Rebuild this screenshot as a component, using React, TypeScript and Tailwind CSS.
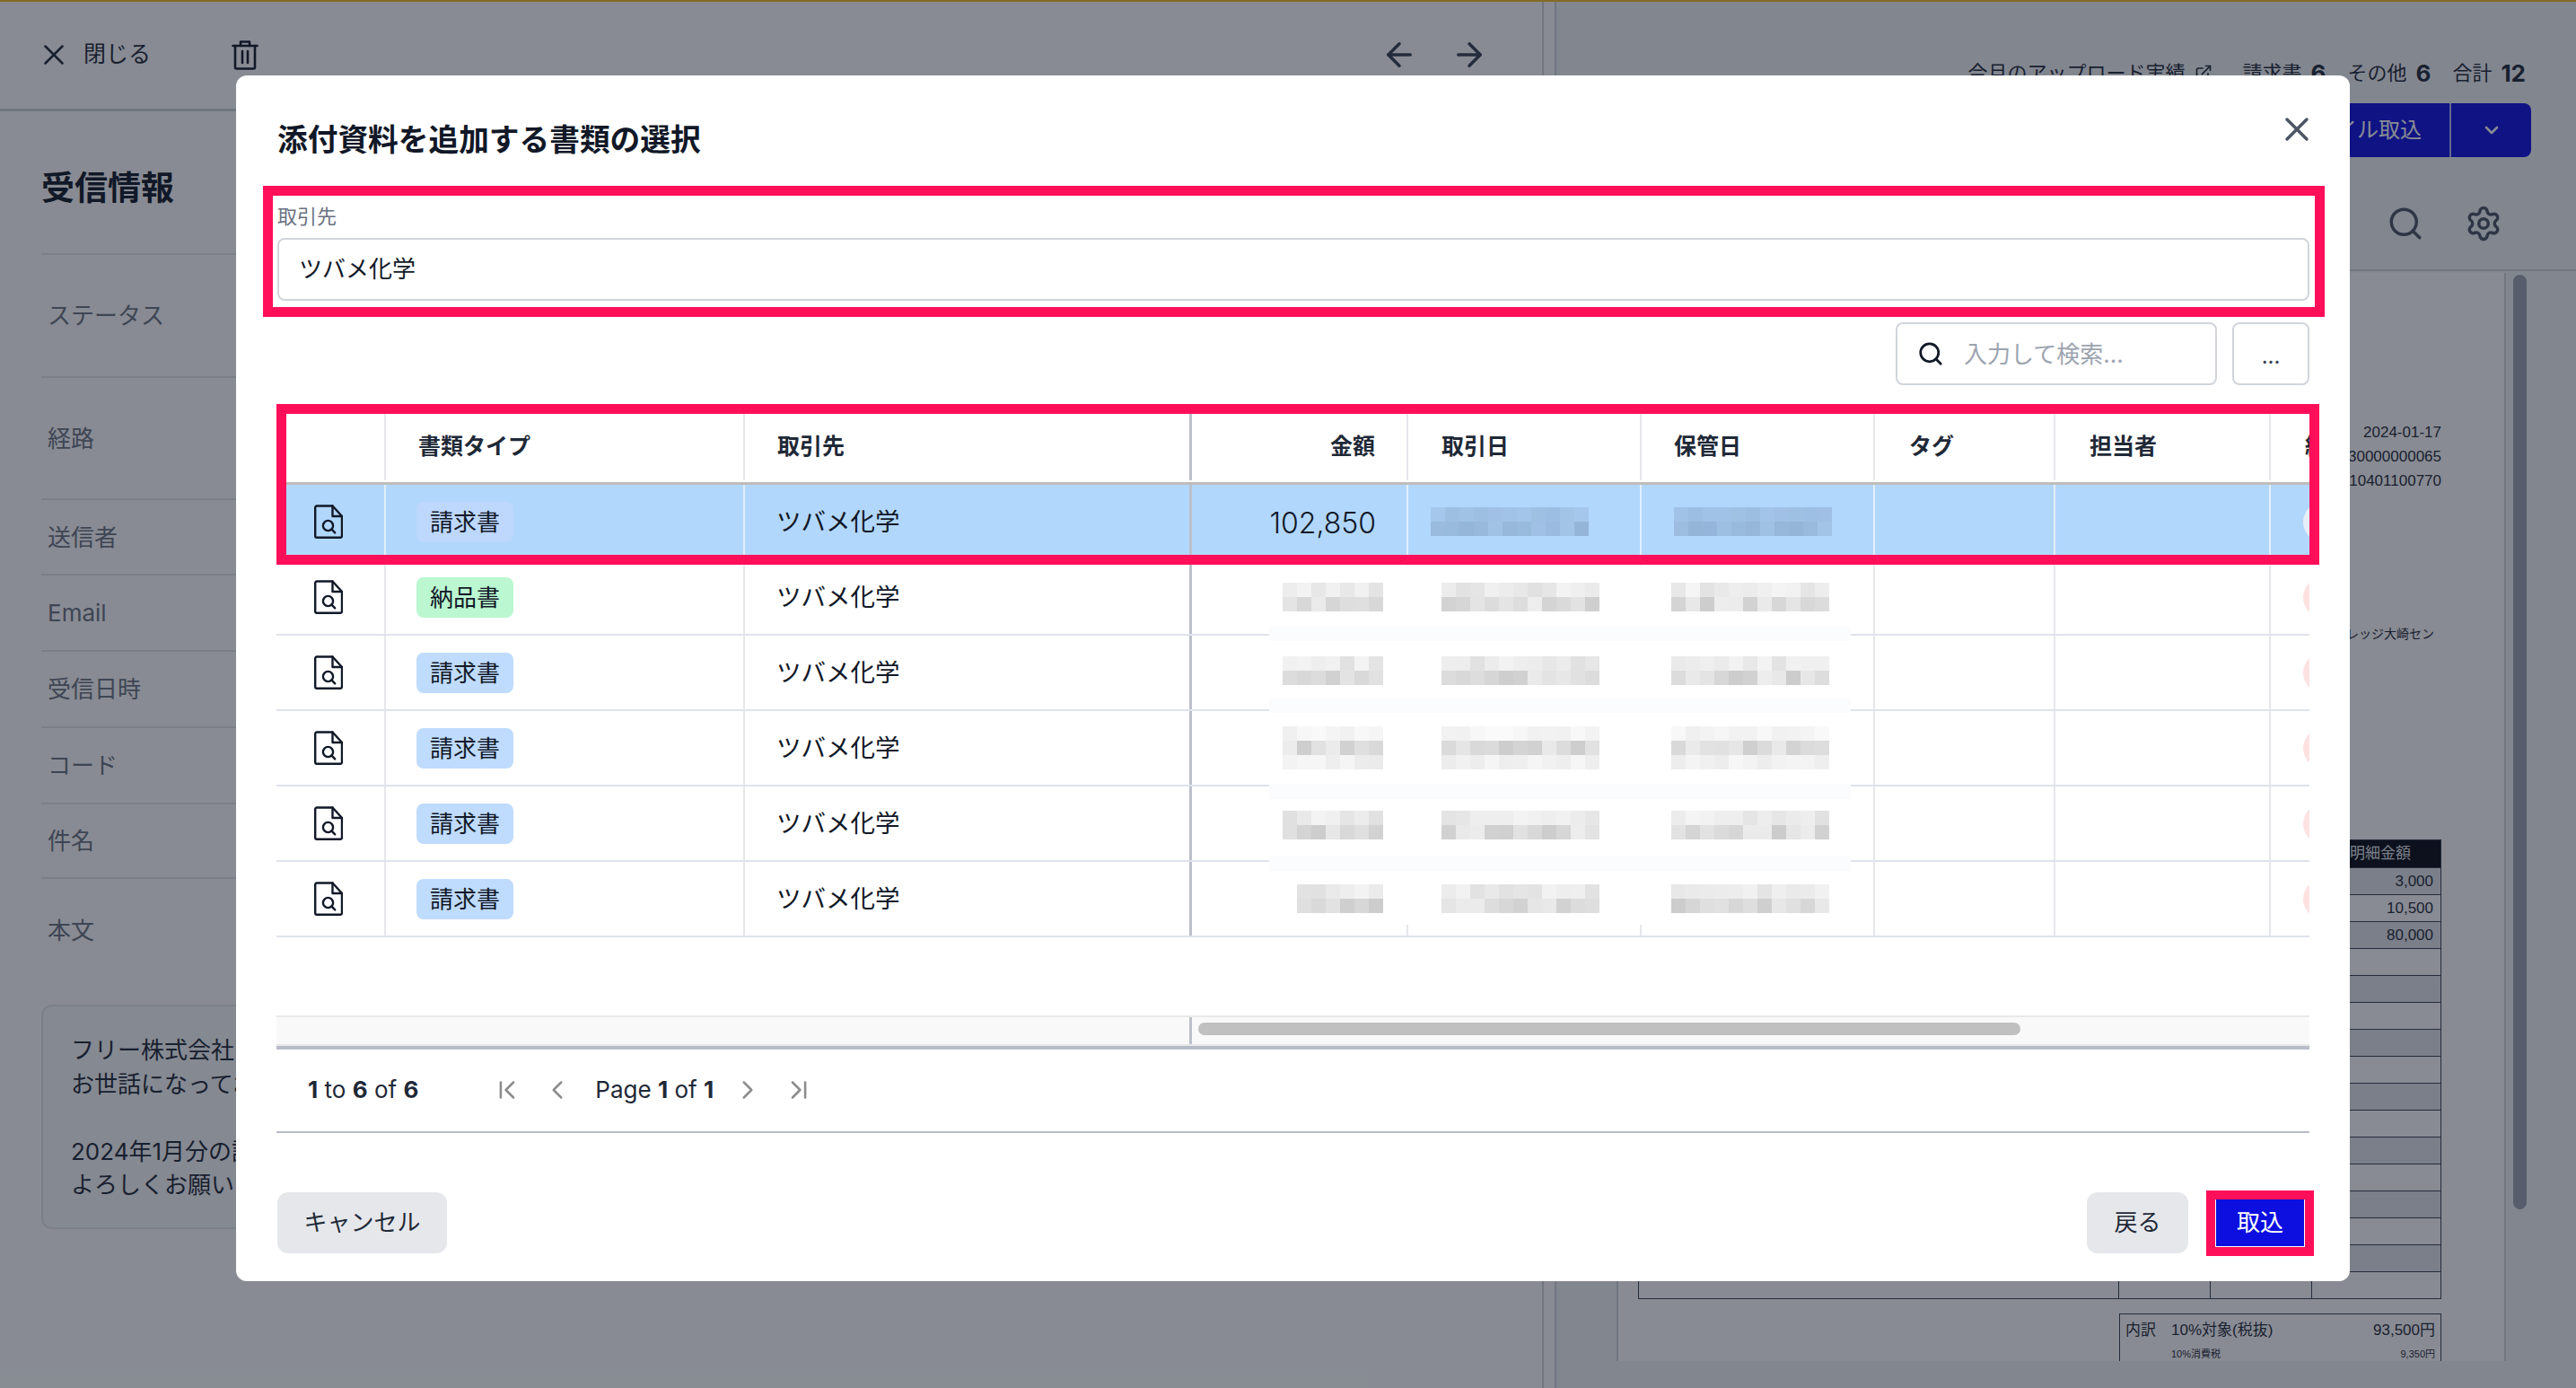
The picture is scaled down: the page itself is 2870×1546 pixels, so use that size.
import React from 'react';
import { X, ArrowLeft, ArrowRight, Search, Settings, ExternalLink, ChevronDown, ChevronFirst, ChevronLast, ChevronLeft, ChevronRight } from 'lucide-react';

const leftRows: [string, string][] = [
  ['ステータス', 'h-[137px]'],
  ['経路', 'h-[136px]'],
  ['送信者', 'h-[84px]'],
  ['Email', 'h-[85px]'],
  ['受信日時', 'h-[85px]'],
  ['コード', 'h-[85px]'],
  ['件名', 'h-[83px]'],
];

const docs = [
  { type: '請求書', badge: 'bg-[#bfdbfe]', selected: true, amount: '102,850', lines: 2, cols: 7, dy: 0 },
  { type: '納品書', badge: 'bg-[#bbf7d0]', selected: false, amount: '', lines: 2, cols: 7, dy: 0 },
  { type: '請求書', badge: 'bg-[#bfdbfe]', selected: false, amount: '', lines: 2, cols: 7, dy: -4 },
  { type: '請求書', badge: 'bg-[#bfdbfe]', selected: false, amount: '', lines: 3, cols: 7, dy: 0 },
  { type: '請求書', badge: 'bg-[#bfdbfe]', selected: false, amount: '', lines: 2, cols: 7, dy: 4 },
  { type: '請求書', badge: 'bg-[#bfdbfe]', selected: false, amount: '', lines: 2, cols: 6, dy: 0 },
];

const pix = (seed: number, r: number, c: number) => {
  const v = Math.sin(seed * 12.9898 + r * 78.233 + c * 37.719) * 43758.5453;
  return v - Math.floor(v);
};

// row weights so the mosaic reads like a blurred line of text
const weights: Record<number, number[][]> = {
  2: [[0.04, 0.08], [0.07, 0.13]],
  3: [[0.02, 0.04], [0.07, 0.13], [0.03, 0.05]],
};

// モザイク処理された値
const Mosaic = ({ seed, lines, cols, dy = 0, tint = false }: { seed: number; lines: number; cols: number; dy?: number; tint?: boolean }) => (
  <div className="relative z-[2] flex flex-col" style={{ marginTop: dy }}>
    {Array.from({ length: lines }).map((_, r) => (
      <div key={r} className="flex">
        {Array.from({ length: cols }).map((_, c) => {
          const [base, range] = weights[lines][r];
          const a = base + pix(seed, r, c) * range;
          return (
            <div
              key={c}
              className="h-4 w-4"
              style={{ backgroundColor: tint ? `rgba(70,90,120,${a + 0.08})` : `rgba(0,0,0,${a})` }}
            />
          );
        })}
      </div>
    ))}
  </div>
);

const DocIcon = () => (
  <svg width="32" height="38" viewBox="0 0 32 38" fill="none" stroke="#111827" strokeWidth="2.4" strokeLinejoin="round" strokeLinecap="round">
    <path d="M3 1.5h17.5L31 13v22a1.8 1.8 0 0 1-1.8 1.8H3A1.8 1.8 0 0 1 1.2 35V3.3A1.8 1.8 0 0 1 3 1.5z" />
    <path d="M20.5 1.5V13H31" />
    <circle cx="15.5" cy="23.5" r="5.6" />
    <path d="M19.6 27.6l3.6 3.8" />
  </svg>
);

const TrashIcon = () => (
  <svg width="30" height="34" viewBox="0 0 30 34" fill="none" stroke="#111827" strokeWidth="2.6" strokeLinecap="round" strokeLinejoin="round">
    <path d="M1.5 7h27" />
    <path d="M10 7V2.5h10V7" />
    <path d="M4 7v24a1.5 1.5 0 0 0 1.5 1.5h19A1.5 1.5 0 0 0 26 31V7" />
    <path d="M12 13v13M18 13v13" />
  </svg>
);

const App: React.FC = () => {
  return (
    <div className="relative flex h-screen w-screen flex-col overflow-hidden bg-white font-['Inter','Noto_Sans_CJK_JP',sans-serif] text-[#1f2937]">
      <div className="h-[2px] shrink-0 bg-[#fbbf24]" />
      <div className="flex min-h-0 flex-1">
        {/* Left: 受信情報 */}
        <div className="h-full w-[1734px] shrink-0 border-r-2 border-[#d1d5db]">
          <div className="h-full w-[1720px] border-r-2 border-[#d1d5db]">
            <div className="flex h-[122px] items-center border-b-[3px] border-[#d1d5db] pb-[2px] pl-[41px]">
              <X size={38} strokeWidth={1.6} />
              <span className="ml-[14px] text-[25px]">閉じる</span>
              <div className="ml-[90px] flex">
                <TrashIcon />
              </div>
              <div className="ml-auto mr-[60px] flex gap-[36px] text-[#374151]">
                <ArrowLeft size={42} strokeWidth={2} />
                <ArrowRight size={42} strokeWidth={2} />
              </div>
            </div>
            <div className="pl-[46px] pr-[38px]">
              <div className="flex h-[158px] items-center pt-[14px] text-[37px] font-bold text-[#111827]">受信情報</div>
              {leftRows.map(([label, h]) => (
                <div key={label} className={`flex items-center border-t-2 border-[#e5e7eb] pl-[7px] text-[26px] text-[#6b7280] ${h}`}>
                  {label}
                </div>
              ))}
              <div className="h-[142px] border-t-2 border-[#e5e7eb] pl-[7px] pt-[38px] text-[26px] text-[#6b7280]">本文</div>
              <div className="h-[250px] rounded-xl border-2 border-[#e5e7eb] bg-[#f9fafb] px-[31px] pt-[30px] text-[26px] leading-[37.5px]">
                <div>フリー株式会社 御中</div>
                <div>お世話になっております。</div>
                <div className="h-[37.5px]" />
                <div>2024年1月分の請求書をお送りします。</div>
                <div>よろしくお願いいたします。</div>
              </div>
            </div>
          </div>
        </div>

        {/* Right: プレビュー */}
        <div className="flex h-full min-w-0 flex-1 flex-col bg-[#f3f4f6]">
          <div className="flex h-[300px] shrink-0 flex-col items-end border-b-2 border-[#d1d5db] pr-[50px]">
            <div className="mt-[62px] flex h-[34px] items-center pr-[6px] text-[22px]">
              <span>今月のアップロード実績</span>
              <ExternalLink size={20} className="ml-[10px]" />
              <span className="ml-[34px]">請求書</span>
              <b className="ml-[10px] text-[26px]">6</b>
              <span className="ml-[24px]">その他</span>
              <b className="ml-[10px] text-[26px]">6</b>
              <span className="ml-[24px]">合計</span>
              <b className="ml-[10px] text-[26px]">12</b>
            </div>
            <div className="mt-[17px] flex h-[60px] items-center rounded-lg bg-[#0c0fe0] text-white">
              <span className="pl-8 pr-[31px] text-[24px]">ファイル取込</span>
              <div className="flex h-full w-[91px] items-center justify-center border-l-2 border-white/70">
                <ChevronDown size={24} strokeWidth={2.6} />
              </div>
            </div>
            <div className="mt-[53px] flex items-center gap-[45px] pr-[32px] text-[#4b5563]">
              <Search size={42} strokeWidth={2} />
              <Settings size={42} strokeWidth={2} />
            </div>
          </div>
          <div className="flex min-h-0 flex-1 gap-2 pl-[67px]">
            <div className="mt-[2px] flex h-[1212px] w-[991px] flex-col items-end overflow-hidden border-x-2 border-[#d1d5db] bg-white pr-[70px] font-['Liberation_Sans','Noto_Sans_CJK_JP',sans-serif]">
              <div className="mt-[168px] flex flex-col items-end gap-[7px] text-[17px] leading-[20px]">
                <span>2024-01-17</span>
                <span>T1230000000065</span>
                <span>0310401100770</span>
              </div>
              <div className="mr-2 mt-[148px] whitespace-nowrap text-[14px] leading-[24px]">東京都品川区ナレッジ大崎セン</div>
              <div className="mt-[217px] w-[895px] border border-[#374151] text-[17px]">
                <div className="flex h-[30px] bg-[#060a12] text-[#e5e7eb]">
                  <span className="ml-auto w-[101px] leading-[30px]">明細金額</span>
                </div>
                {Array.from({ length: 16 }).map((_, i) => (
                  <div key={i} className={`flex h-[30px] border-t border-[#374151] ${i % 2 === 0 ? 'bg-[#e5e7eb]' : 'bg-white'}`}>
                    <div className="flex-1" />
                    <div className="w-[102px] border-l border-[#374151]" />
                    <div className="w-[113px] border-l border-[#374151]" />
                    <div className="w-[144px] border-l border-[#374151] pr-2 text-right leading-[30px]">
                      {['3,000', '10,500', '80,000'][i] ?? ''}
                    </div>
                  </div>
                ))}
              </div>
              <div className="mt-[16px] w-[359px] border border-[#374151] px-[6px] pt-1 text-[17px]">
                <div className="flex h-[28px] items-center">
                  <span className="w-[51px]">内訳</span>
                  <span>10%対象(税抜)</span>
                  <span className="ml-auto">93,500円</span>
                </div>
                <div className="flex h-[24px] items-center text-[11px]">
                  <span className="ml-[51px]">10%消費税</span>
                  <span className="ml-auto">9,350円</span>
                </div>
              </div>
            </div>
            <div className="mt-[4px] h-[1041px] w-[15px] rounded-full bg-[#9ca3af]" />
          </div>
        </div>
      </div>

      {/* overlay */}
      <div className="absolute inset-0 bg-[#111827]/50" />

      {/* Modal */}
      <div className="absolute left-[263px] top-[84px] flex h-[1343px] w-[2355px] flex-col rounded-xl bg-white pl-[46px] pr-[45px] text-[#111827]">
        <div className="flex h-[142px] shrink-0 items-center justify-between">
          <h2 className="pt-[2px] text-[33.7px] font-bold">添付資料を追加する書類の選択</h2>
          <X size={44} strokeWidth={1.9} className="-mr-[8px] -mt-[22px] text-[#4b5563]" />
        </div>
        <div className="h-[39px] shrink-0 pt-[2px] text-[22px] leading-[26px] text-[#6b7280]">取引先</div>
        <div className="flex h-[70px] shrink-0 items-center rounded-lg border-2 border-[#d1d5db] pb-[2px] pl-[22px] text-[26px]">ツバメ化学</div>
        <div className="mt-[24px] flex h-[70px] shrink-0 justify-end gap-[17px]">
          <div className="flex w-[358px] items-center rounded-lg border-2 border-[#d1d5db] pl-[22px]">
            <Search size={30} strokeWidth={2.2} className="text-[#111827]" />
            <span className="ml-[22px] text-[26px] text-[#9ca3af]">入力して検索...</span>
          </div>
          <div className="flex w-[86px] items-end justify-center rounded-lg border-2 border-[#d1d5db] pb-[18px] text-[24px] leading-[24px] text-[#374151]">...</div>
        </div>

        {/* table */}
        <div className="relative mt-[31px] h-[705px] shrink-0 overflow-hidden -ml-px">
          <div className="flex h-[80px] w-[2400px] border-b-[3px] border-[#bdbdbd] pb-[2px] text-[25px] font-semibold text-[#1f2937]">
            <div className="w-[122px] border-r-2 border-[#e5e7eb]" />
            <div className="flex w-[400px] items-center border-r-2 border-[#e5e7eb] pl-[36px]">書類タイプ</div>
            <div className="flex w-[498px] items-center border-r-[3px] border-[#bcc0cb] pl-[36px]">取引先</div>
            <div className="flex w-[241px] items-center justify-end border-r-2 border-[#e5e7eb] pr-[35px]">金額</div>
            <div className="flex w-[260px] items-center border-r-2 border-[#e5e7eb] pl-[37px]">取引日</div>
            <div className="flex w-[260px] items-center border-r-2 border-[#e5e7eb] pl-[36px]">保管日</div>
            <div className="flex w-[201px] items-center border-r-2 border-[#e5e7eb] pl-[38px]">タグ</div>
            <div className="flex w-[240px] items-center border-r-2 border-[#e5e7eb] pl-[38px]">担当者</div>
            <div className="flex w-[178px] items-center pl-[38px]">紐付け</div>
          </div>
          {docs.map((d, i) => {
            const line = d.selected ? 'border-[#e3eefb]' : 'border-[#e5e7eb]';
            return (
              <div key={i} className={`flex h-[84px] w-[2400px] border-b-2 border-[#dfe3ec] text-[27.5px] ${d.selected ? 'bg-[#b2d7fc]' : 'bg-white'}`}>
                <div className={`flex w-[122px] items-center justify-center border-r-2 pr-[4px] ${line}`}>
                  <DocIcon />
                </div>
                <div className={`flex w-[400px] items-center border-r-2 pl-[34px] text-[26px] ${line}`}>
                  <span className={`flex h-[45px] w-[108px] items-center justify-center rounded-lg ${d.selected ? 'bg-[#bdd7fd]' : d.badge}`}>{d.type}</span>
                </div>
                <div className="flex w-[498px] items-center border-r-[3px] border-[#bcc0cb] pl-[35px] pt-[2px]">ツバメ化学</div>
                <div className={`flex w-[241px] items-center justify-end border-r-2 pr-[26px] ${line}`}>
                  {d.amount ? (
                    <span className="pr-[8px] pt-[3px] text-[32px] font-light">{d.amount}</span>
                  ) : (
                    <Mosaic seed={i * 3 + 1} lines={d.lines} cols={d.cols} dy={d.dy} />
                  )}
                </div>
                <div className={`flex w-[260px] items-center border-r-2 ${d.selected ? 'pl-[25px]' : 'pl-[37px]'} ${line}`}>
                  <Mosaic seed={i * 3 + 2} lines={d.lines} cols={11} dy={d.dy} tint={d.selected} />
                </div>
                <div className={`flex w-[260px] items-center border-r-2 ${d.selected ? 'pl-[36px]' : 'pl-[33px]'} ${line}`}>
                  <Mosaic seed={i * 3 + 3} lines={d.lines} cols={11} dy={d.dy} tint={d.selected} />
                </div>
                <div className={`w-[201px] border-r-2 ${line}`} />
                <div className={`w-[240px] border-r-2 ${line}`} />
                <div className="flex w-[178px] items-center pl-[36px]">
                  <span className={`h-[45px] w-[60px] rounded-full ${d.selected ? 'bg-[#e6eef8]' : 'bg-[#fee2e2]'}`} />
                </div>
              </div>
            );
          })}
          {/* モザイク編集の白塗り */}
          <div className="absolute left-[1106px] top-[170px] z-[1] h-[400px] w-[648px] bg-white">
            <div className="absolute left-0 right-0 top-[68px] h-4 bg-[#fbfcfe]" />
            <div className="absolute left-0 right-0 top-[148px] h-4 bg-[#fbfcfe]" />
            <div className="absolute left-0 right-0 top-[243px] h-[17px] bg-[#fbfcfe]" />
            <div className="absolute left-0 right-0 top-[323px] h-[17px] bg-[#fbfcfe]" />
          </div>
          {/* scrollbar */}
          <div className="absolute bottom-0 left-0 right-0 flex h-[34px] border-y-2 border-t-[#e8e8e8] border-b-[#e8e8e8] bg-[#f9f9f9]">
            <div className="h-full w-[1020px] shrink-0 border-r-[3px] border-[#bcc0cb]" />
            <div className="ml-[7px] mt-[6px] h-[14px] w-[916px] rounded-full bg-[#c0c0c0]" />
          </div>
        </div>

        {/* pagination */}
        <div className="flex h-[97px] shrink-0 items-center border-b-2 border-t-[4px] border-b-[#b8bcc8] border-t-[#b8bcc8] pb-[2px] pl-[35px] text-[26px] text-[#1f2937] -ml-px">
          <span>
            <b>1</b> to <b>6</b> of <b>6</b>
          </span>
          <div className="ml-[82px] flex items-center text-[#8c8c8c]">
            <ChevronFirst size={34} strokeWidth={1.8} />
            <ChevronLeft size={34} strokeWidth={1.8} className="ml-[22px]" />
          </div>
          <span className="ml-[25px]">
            Page <b>1</b> of <b>1</b>
          </span>
          <div className="ml-[21px] flex items-center text-[#8c8c8c]">
            <ChevronRight size={34} strokeWidth={1.8} />
            <ChevronLast size={34} strokeWidth={1.8} className="ml-[23px]" />
          </div>
        </div>

        {/* footer */}
        <div className="mt-[66px] flex h-[68px] shrink-0 items-center text-[26px]">
          <button className="h-full w-[189px] rounded-xl bg-[#e5e7eb] pb-[2px] text-[#1f2937]">キャンセル</button>
          <button className="ml-auto h-full w-[113px] rounded-xl bg-[#e5e7eb] pb-[2px] text-[#1f2937]">戻る</button>
          <button className="ml-[31px] mr-[6px] h-[52px] w-[98px] bg-[#0c0fe0] pb-[2px] text-white">取込</button>
        </div>

        {/* 注釈の赤枠 */}
        <div className="absolute left-[30px] top-[123px] h-[146px] w-[2297px] border-[11px] border-[#ff0f5a]" />
        <div className="absolute left-[45px] top-[366px] h-[179px] w-[2276px] border-[11px] border-[#ff0f5a]" />
        <div className="absolute left-[2195px] top-[1242px] h-[73px] w-[120px] border-[10px] border-[#ff0f5a]" />
      </div>
    </div>
  );
};

export default App;
